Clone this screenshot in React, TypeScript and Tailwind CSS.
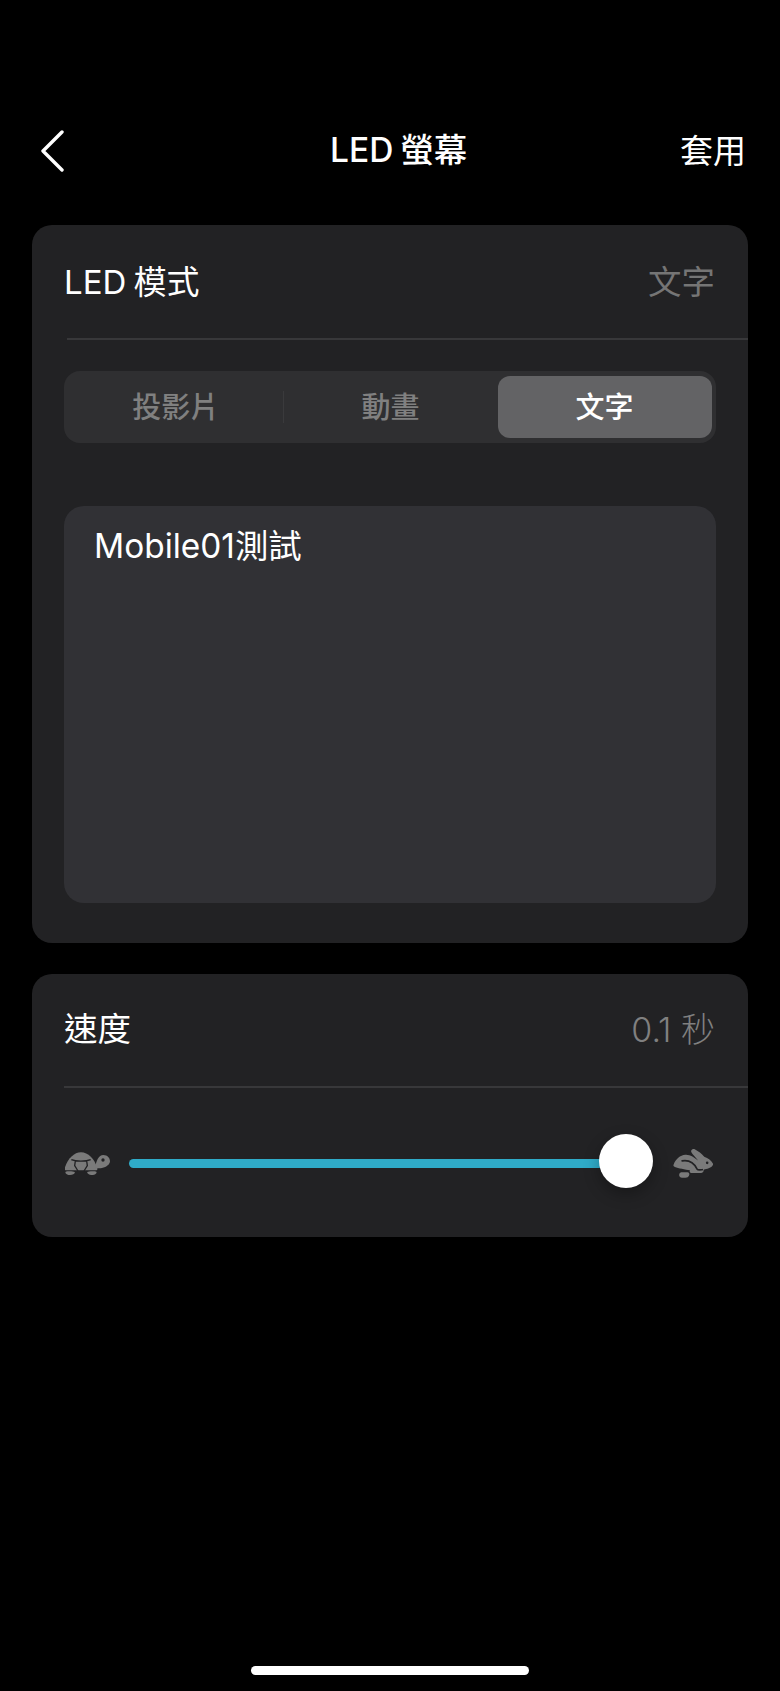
const fontStack = "font-['Inter','Noto_Sans_CJK_TC',sans-serif]";

function BackIcon() {
  return (
    <svg width="24" height="42" viewBox="0 0 24 42" fill="none">
      <path d="M22 2L3 21L22 40" stroke="#fff" strokeWidth="3.4" strokeLinecap="round" strokeLinejoin="round" />
    </svg>
  );
}

function TurtleIcon() {
  return (
    <svg width="45" height="24" viewBox="45 67 135 72" fill="#7a7a7a">
      <path d="M44 116C52 88 72 68 93 68C114 68 134 88 142 116C143 120 141 122 138 122H48C45 122 43 120 44 116Z" />
      <path d="M64 90C78 96 108 96 122 90M76 94L74 108L84 124M110 94L112 108L102 124" fill="none" stroke="#222224" strokeWidth="4" />
      <path d="M47 126C52 124 70 124 74 127C76 131 68 136 60 136C52 136 44 131 47 126Z" />
      <path d="M112 127C116 124 134 124 139 126C142 131 134 136 126 136C118 136 110 131 112 127Z" />
      <path fillRule="evenodd" d="M136 114C138 94 146 76 160 76C172 76 180 85 180 94C180 104 170 112 156 115C150 116 142 116 136 114ZM159 86A5 5 0 1 0 159 96A5 5 0 1 0 159 86Z" />
    </svg>
  );
}

function RabbitIcon() {
  return (
    <svg width="41" height="31" viewBox="36 46 126 94" fill="#7a7a7a">
      <path
        fillRule="evenodd"
        d="M38 96C44 80 58 67 74 66C88 65 102 74 113 84C106 74 96 66 92 58C90 51 97 46 104 50C114 55 124 63 132 72C144 76 154 84 159 94C160 101 152 106 142 109C136 110 132 111 130 113C131 118 127 122 122 122H92C88 122 86 118 88 114C74 112 52 108 42 104C38 102 36 100 38 96ZM141 87A4 4 0 1 0 141 95A4 4 0 1 0 141 87Z"
      />
      <path d="M64 85C82 82 100 90 110 110C112 114 118 113 126 112" fill="none" stroke="#222224" strokeWidth="5" strokeLinecap="round" />
      <path d="M62 120H80C86 120 88 126 85 131C83 135 80 137 74 137H64C58 137 54 132 55 127C56 123 58 120 62 120Z" />
    </svg>
  );
}

function App() {
  return (
    <div className={`flex min-h-[1691px] w-[780px] flex-col bg-black ${fontStack}`}>
      {/* 顶部导航 */}
      <header className="mt-[130px] grid h-[42px] grid-cols-[290px_1fr_auto] items-center pl-[40px] pr-[34px]">
        <BackIcon />
        <h1 className="text-[33.5px] font-medium leading-none text-white [word-spacing:-2px]">LED 螢幕</h1>
        <span className="text-[33px] leading-none text-white">套用</span>
      </header>

      {/* LED 模式 */}
      <section className="mx-[32px] mt-[53px] h-[718px] rounded-[20px] bg-[#222224]">
        <div className="flex h-[113px] items-center justify-between pl-[32px] pr-[33px] pt-[2px]">
          <span className="text-[33px] leading-none text-white [word-spacing:-2px]">LED 模式</span>
          <span className="text-[33.5px] leading-none text-[#757575]">文字</span>
        </div>
        <div className="ml-[35px] h-[2px] bg-[#38383a]" />
        <div className="mx-[32px] mt-[31px] flex h-[72px] items-center rounded-[16px] bg-[#2f2f31] pl-[5px] pr-[4.5px]">
          <div className="flex flex-1 items-center justify-center pt-[2px] text-[29px] font-medium text-[#808080]">
            投影片
          </div>
          <div className="h-[32px] w-[1px] bg-[#3a3a3c]" />
          <div className="flex w-[214px] items-center justify-center pt-[2px] text-[29px] font-medium text-[#808080]">動畫</div>
          <div className="flex h-[62px] w-[214px] items-center justify-center rounded-[12px] bg-[#636365] pt-[2px] text-[29px] font-medium text-white">
            文字
          </div>
        </div>
        <div className="mx-[32px] mt-[63px] h-[397px] rounded-[20px] bg-[#313135] px-[30px] pt-[18px]">
          <p className="text-[33.4px] leading-[44px] text-white">Mobile01測試</p>
        </div>
      </section>

      {/* 速度 */}
      <section className="mx-[32px] mt-[31px] h-[263px] rounded-[20px] bg-[#222224]">
        <div className="flex h-[112px] items-center justify-between pl-[32px] pr-[33px]">
          <span className="text-[33.5px] leading-none text-white">速度</span>
          <span className="text-[34px] font-light leading-none text-[#808080]">0.1 秒</span>
        </div>
        <div className="ml-[32px] h-[2px] bg-[#38383a]" />
        <div className="flex items-center pl-[33px] pr-[34px] pt-[60px]">
          <TurtleIcon />
          <div className="relative ml-[19px] h-[9px] w-[480px] rounded-full bg-[#2fabc8]">
            <div className="absolute right-[-44px] top-[-25px] h-[54px] w-[54px] rounded-full bg-white shadow-[0_6px_16px_rgba(0,0,0,0.3)]" />
          </div>
          <div className="ml-auto">
            <RabbitIcon />
          </div>
        </div>
      </section>

      {/* Home indicator */}
      <div className="mx-auto mb-[16px] mt-auto h-[9px] w-[278px] rounded-full bg-white" />
    </div>
  );
}

export default App;
